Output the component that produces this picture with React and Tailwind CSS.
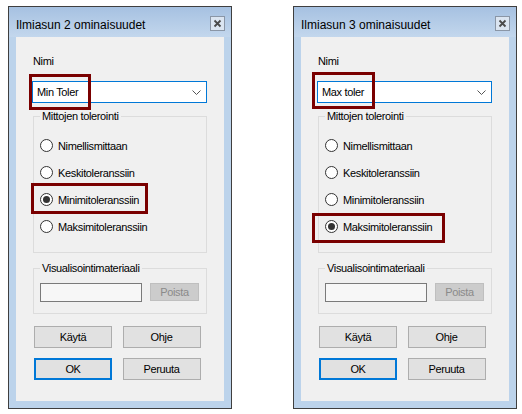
const OPTIONS = [
  "Nimellismittaan",
  "Keskitoleranssiin",
  "Minimitoleranssiin",
  "Maksimitoleranssiin",
];

function Radio({ label, checked }) {
  return (
    <div className="flex h-[27px] items-center">
      <span className="flex h-[13px] w-[13px] items-center justify-center rounded-full border border-[#333333] bg-white">
        {checked ? <span className="h-[7px] w-[7px] rounded-full bg-[#333333]" /> : null}
      </span>
      <span className="ml-[5px]">{label}</span>
    </div>
  );
}

function Button({ children, primary }) {
  return (
    <div
      className={
        primary
          ? "flex h-[22px] w-[78px] items-center justify-center border-2 border-[#0078d7] bg-[#e1e1e1]"
          : "flex h-[22px] w-[78px] items-center justify-center border border-[#adadad] bg-[#e1e1e1]"
      }
    >
      {children}
    </div>
  );
}

function Dialog({ title, name, selected, markName, markOption }) {
  return (
    <div className="flex h-[403px] w-[224px] flex-col border border-[#3f3f3f] bg-[#bcd3eb]">
      {/* title bar */}
      <div className="flex h-[30px] items-start justify-between bg-gradient-to-b from-[#a6c1e1] to-[#c3d7ed] pl-[7px] pr-[6px]">
        <span className="pt-[11px] text-[12px] leading-[14px] text-black">{title}</span>
        <span className="mt-[9px] flex h-[15px] w-[15px] items-center justify-center border border-[#8a96a6] bg-[#dbe5f1]">
          <svg width="9" height="9" viewBox="0 0 9 9">
            <path d="M1.5 1.5 L7.5 7.5 M7.5 1.5 L1.5 7.5" stroke="#4a4a4a" strokeWidth="1.8" />
          </svg>
        </span>
      </div>

      {/* client area */}
      <div className="relative mx-[7px] flex flex-1 flex-col bg-[#f0f0f0] pl-[16px] pt-[17px] text-[11px] leading-[14px] tracking-[-0.35px] text-black">
        <div className="ml-[1px]">Nimi</div>

        <div className="mt-[13px] flex h-[22px] w-[175px] items-center justify-between border border-[#0078d7] bg-white pl-[4px] pr-[5px]">
          <span>{name}</span>
          <svg width="9" height="5" viewBox="0 0 9 5">
            <path d="M0.5 0.5 L4.5 4.5 L8.5 0.5" stroke="#555555" fill="none" strokeWidth="1" />
          </svg>
        </div>

        <fieldset className="ml-[1px] mt-[6px] w-[174px] border border-[#dcdcdc] pb-[12px] pl-[6px]">
          <legend className="px-[2px]">Mittojen tolerointi</legend>
          <div className="pt-[9px]">
            {OPTIONS.map((o) => (
              <Radio key={o} label={o} checked={o === selected} />
            ))}
          </div>
        </fieldset>

        <fieldset className="ml-[1px] mt-[8px] w-[174px] border border-[#dcdcdc] pb-[11px] pl-[6px]">
          <legend className="px-[2px]">Visualisointimateriaali</legend>
          <div className="flex items-start gap-[8px] pt-[8px]">
            <div className="h-[19px] w-[102px] border border-[#7a7a7a] bg-[#f7f7f7]" />
            <div className="flex h-[18px] w-[49px] items-center justify-center border border-[#bfbfbf] bg-[#cccccc] text-[#8a8a8a]">
              Poista
            </div>
          </div>
        </fieldset>

        <div className="ml-[2px] mt-[12px] grid w-[167px] grid-cols-2 gap-x-[10px] gap-y-[10px]">
          <Button>Käytä</Button>
          <Button>Ohje</Button>
          <Button primary>OK</Button>
          <Button>Peruuta</Button>
        </div>

        <div className={markName} />
        <div className={markOption} />
      </div>

      <div className="h-[7px]" />
    </div>
  );
}

export default function App() {
  return (
    <div className="flex h-[414px] w-[522px] gap-[61px] bg-white pl-[8px] pt-[6px] font-['Liberation_Sans',Arial,sans-serif]">
      <Dialog
        title="Ilmiasun 2 ominaisuudet"
        name="Min Toler"
        selected="Minimitoleranssiin"
        markName="absolute left-[13px] top-[37px] h-[36px] w-[62px] border-[3px] border-[#7a0000]"
        markOption="absolute left-[15px] top-[146px] h-[31px] w-[117px] border-[3px] border-[#7a0000]"
      />
      <Dialog
        title="Ilmiasun 3 ominaisuudet"
        name="Max toler"
        selected="Maksimitoleranssiin"
        markName="absolute left-[11px] top-[35px] h-[37px] w-[63px] border-[3px] border-[#7a0000]"
        markOption="absolute left-[11px] top-[176px] h-[30px] w-[133px] border-[3px] border-[#7a0000]"
      />
    </div>
  );
}
